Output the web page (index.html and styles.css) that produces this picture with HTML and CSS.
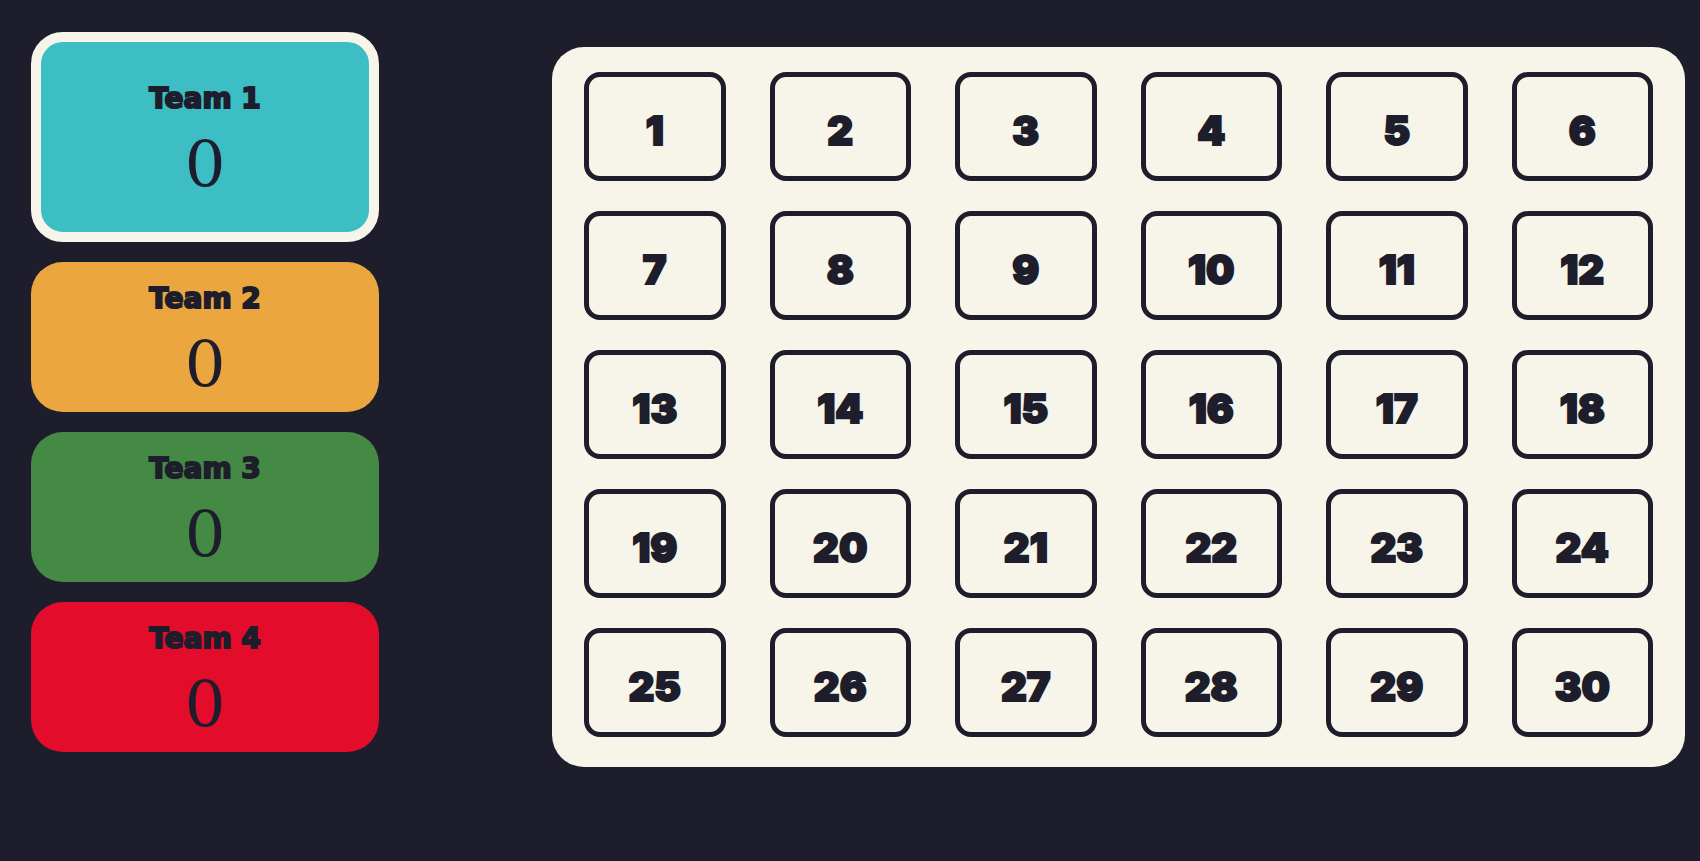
FILE: index.html
```html
<!DOCTYPE html>
<html lang="en">
<head>
<meta charset="utf-8">
<title>Team Board</title>
<link rel="stylesheet" href="styles.css">
</head>
<body>
<main class="game">
  <section class="teams" aria-label="Teams">
    <article class="team team-teal team-active"><h2 class="team-name">Team 1</h2><p class="team-score">0</p></article>
    <article class="team team-orange"><h2 class="team-name">Team 2</h2><p class="team-score">0</p></article>
    <article class="team team-green"><h2 class="team-name">Team 3</h2><p class="team-score">0</p></article>
    <article class="team team-red"><h2 class="team-name">Team 4</h2><p class="team-score">0</p></article>
  </section>
  <section class="board" aria-label="Questions">
    <button class="tile" type="button">1</button>
    <button class="tile" type="button">2</button>
    <button class="tile" type="button">3</button>
    <button class="tile" type="button">4</button>
    <button class="tile" type="button">5</button>
    <button class="tile" type="button">6</button>
    <button class="tile" type="button">7</button>
    <button class="tile" type="button">8</button>
    <button class="tile" type="button">9</button>
    <button class="tile" type="button">10</button>
    <button class="tile" type="button">11</button>
    <button class="tile" type="button">12</button>
    <button class="tile" type="button">13</button>
    <button class="tile" type="button">14</button>
    <button class="tile" type="button">15</button>
    <button class="tile" type="button">16</button>
    <button class="tile" type="button">17</button>
    <button class="tile" type="button">18</button>
    <button class="tile" type="button">19</button>
    <button class="tile" type="button">20</button>
    <button class="tile" type="button">21</button>
    <button class="tile" type="button">22</button>
    <button class="tile" type="button">23</button>
    <button class="tile" type="button">24</button>
    <button class="tile" type="button">25</button>
    <button class="tile" type="button">26</button>
    <button class="tile" type="button">27</button>
    <button class="tile" type="button">28</button>
    <button class="tile" type="button">29</button>
    <button class="tile" type="button">30</button>
  </section>
</main>
</body>
</html>
```
FILE: styles.css
```css
:root {
  --ink: #1e1d2b;
  --paper: #f7f4e9;
}

* {
  box-sizing: border-box;
}

body {
  margin: 0;
  min-height: 100vh;
  background: var(--ink);
  color: var(--ink);
}

.game {
  display: grid;
  grid-template-columns: 348fr 1133fr;
  column-gap: 173px;
  align-items: start;
  padding: 32px 15px 32px 31px;
}

.teams {
  display: grid;
  gap: 20px;
}

.team {
  display: flex;
  flex-direction: column;
  align-items: center;
  justify-content: center;
  gap: 12px;
  padding: 20px 20px 10px;
  border-radius: 32px;
}

.team-active {
  padding: 40px 20px 30px;
  border: 10px solid var(--paper);
}

.team-teal { background: #3dbdc4; }
.team-orange { background: #eba640; }
.team-green { background: #448a45; }
.team-red { background: #e40c2b; }

.team-name {
  margin: 0;
  font: 700 28px/34px "DejaVu Sans", sans-serif;
  -webkit-text-stroke: 2px var(--ink);
}

.team-score {
  margin: 0;
  font: 64px/74px "DejaVu Serif", serif;
}

.board {
  display: grid;
  grid-template-columns: repeat(6, 1fr);
  gap: 30px 44px;
  margin-top: 15px;
  padding: 25px 32px 30px;
  border-radius: 32px;
  background: var(--paper);
}

.tile {
  padding: 29px 0 20px;
  border: 5px solid var(--ink);
  border-radius: 16px;
  background: transparent;
  color: var(--ink);
  font: 900 40px/50px Inter, sans-serif;
  -webkit-text-stroke: 2px var(--ink);
  cursor: pointer;
}
```
